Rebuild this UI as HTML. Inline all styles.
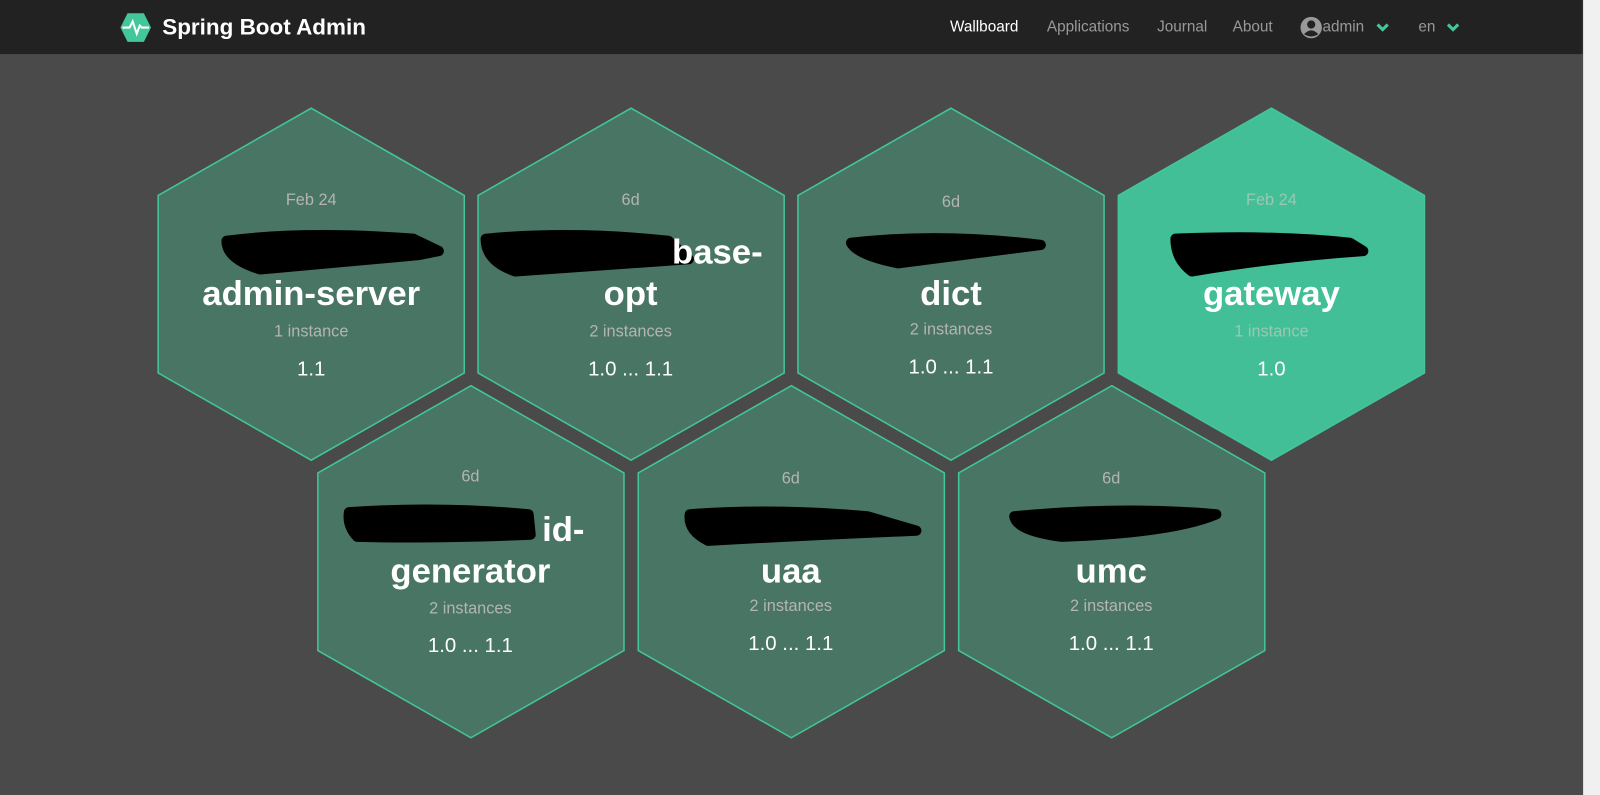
<!DOCTYPE html>
<html><head><meta charset="utf-8"><style>
*{margin:0;padding:0;box-sizing:border-box}
body{width:1600px;height:795px;background:#4a4a4a;font-family:"Liberation Sans",sans-serif;overflow:hidden;position:relative}
.wrap{position:absolute;left:0;top:0;width:1551px;height:779px;transform:scale(1.0204);transform-origin:0 0}
.nav{position:absolute;left:0;top:0;width:1551px;height:53px;background:#222}
.sb{position:absolute;right:0;top:0;width:17px;height:795px;background:#f0f0f0;border-left:1px solid #ddd}
.brand{position:absolute;left:159px;top:14px;color:#fff;font-size:22px;font-weight:bold}
.nl{position:absolute;top:18px;font-size:15px;color:#999}
svg text{font-family:"Liberation Sans",sans-serif;text-anchor:middle}
</style></head><body>
<div class="wrap">
<div class="nav">
<svg style="position:absolute;left:117px;top:12px" width="32" height="30" viewBox="0 0 32 30"><polygon points="8,1 24,1 31,15 24,29 8,29 1,15" fill="#42c69a"/><polyline points="3,15 10,15 13,9 17,21 20,13 22,15 29,15" fill="none" stroke="#fff" stroke-width="2"/></svg>
<div class="brand">Spring Boot Admin</div>
<div class="nl" style="left:931px;color:#fff">Wallboard</div>
<div class="nl" style="left:1026px">Applications</div>
<div class="nl" style="left:1134px">Journal</div>
<div class="nl" style="left:1208px">About</div>
<svg style="position:absolute;left:1274px;top:16px" width="22" height="22" viewBox="0 0 22 22"><circle cx="11" cy="11" r="10.5" fill="#999"/><circle cx="11" cy="8" r="4" fill="#222"/><path d="M4 17.5 Q11 10 18 17.5 Q11 22 4 17.5Z" fill="#222"/></svg>
<div class="nl" style="left:1296px">admin</div>
<svg style="position:absolute;left:1348px;top:22px" width="14" height="10"><polyline points="2,2 7,7 12,2" fill="none" stroke="#42c69a" stroke-width="3"/></svg>
<div class="nl" style="left:1390px">en</div>
<svg style="position:absolute;left:1417px;top:22px" width="14" height="10"><polyline points="2,2 7,7 12,2" fill="none" stroke="#42c69a" stroke-width="3"/></svg>
</div>
<svg style="position:absolute;left:0;top:0" width="1551" height="779">
<defs><polygon id="h" points="0,-172.5 150,-87 150,87 0,172.5 -150,87 -150,-87"/></defs>
<g fill="#497565" stroke="#42c69a" stroke-width="1.5">
<use href="#h" x="305" y="278.5"/><use href="#h" x="618.5" y="278.5"/><use href="#h" x="932" y="278.5"/>
<use href="#h" x="461.5" y="550.5"/><use href="#h" x="775.5" y="550.5"/><use href="#h" x="1089.5" y="550.5"/>
</g>
<use href="#h" x="1246" y="278.5" fill="#42bf96" stroke="#42c69a" stroke-width="1.5"/>
<g fill="#000" stroke="#000" stroke-width="10" stroke-linejoin="round">
<path d="M222 236 Q300 226 405 234 L430 246 L410 250 Q320 258 255 264 Q222 254 222 236Z"/>
<path d="M476 234 Q560 226 655 236 L675 254 Q580 261 505 266 Q476 256 476 234Z"/>
<path d="M834 238 Q920 228 1020 240 Q940 250 880 258 Q840 250 834 238Z"/>
<path d="M1152 234 Q1250 230 1323 238 L1336 246 Q1250 252 1168 266 Q1152 254 1152 234Z"/>
<path d="M342 502 Q430 496 518 504 L520 524 Q420 528 350 526 Q340 515 342 502Z"/>
<path d="M676 504 Q760 498 850 506 L898 520 Q800 524 694 530 Q674 520 676 504Z"/>
<path d="M994 506 Q1100 496 1192 504 Q1150 522 1040 526 Q996 520 994 506Z"/>
</g>
<g fill="#b4b4b4" font-size="16">
<text x="305" y="201">Feb 24</text><text x="618" y="201">6d</text><text x="932" y="203">6d</text><text x="1246" y="201" fill="#9ac8b4">Feb 24</text>
<text x="461" y="472">6d</text><text x="775" y="474">6d</text><text x="1089" y="474">6d</text>
<text x="305" y="330">1 instance</text><text x="618" y="330">2 instances</text><text x="932" y="328">2 instances</text><text x="1246" y="330" fill="#9ac8b4">1 instance</text>
<text x="461" y="601">2 instances</text><text x="775" y="599">2 instances</text><text x="1089" y="599">2 instances</text>
</g>
<g fill="#fff" font-size="20">
<text x="305" y="368">1.1</text><text x="618" y="368">1.0 ... 1.1</text><text x="932" y="366">1.0 ... 1.1</text><text x="1246" y="368">1.0</text>
<text x="461" y="639">1.0 ... 1.1</text><text x="775" y="637">1.0 ... 1.1</text><text x="1089" y="637">1.0 ... 1.1</text>
</g>
<g fill="#fff" font-size="34" font-weight="bold">
<text x="305" y="299">admin-server</text>
<text x="703" y="258">base-</text><text x="618" y="299">opt</text>
<text x="932" y="299">dict</text><text x="1246" y="299">gateway</text>
<text x="552" y="530">id-</text><text x="461" y="571">generator</text>
<text x="775" y="571">uaa</text><text x="1089" y="571">umc</text>
</g>
</svg>
</div>
<div class="sb"></div>
</body></html>
